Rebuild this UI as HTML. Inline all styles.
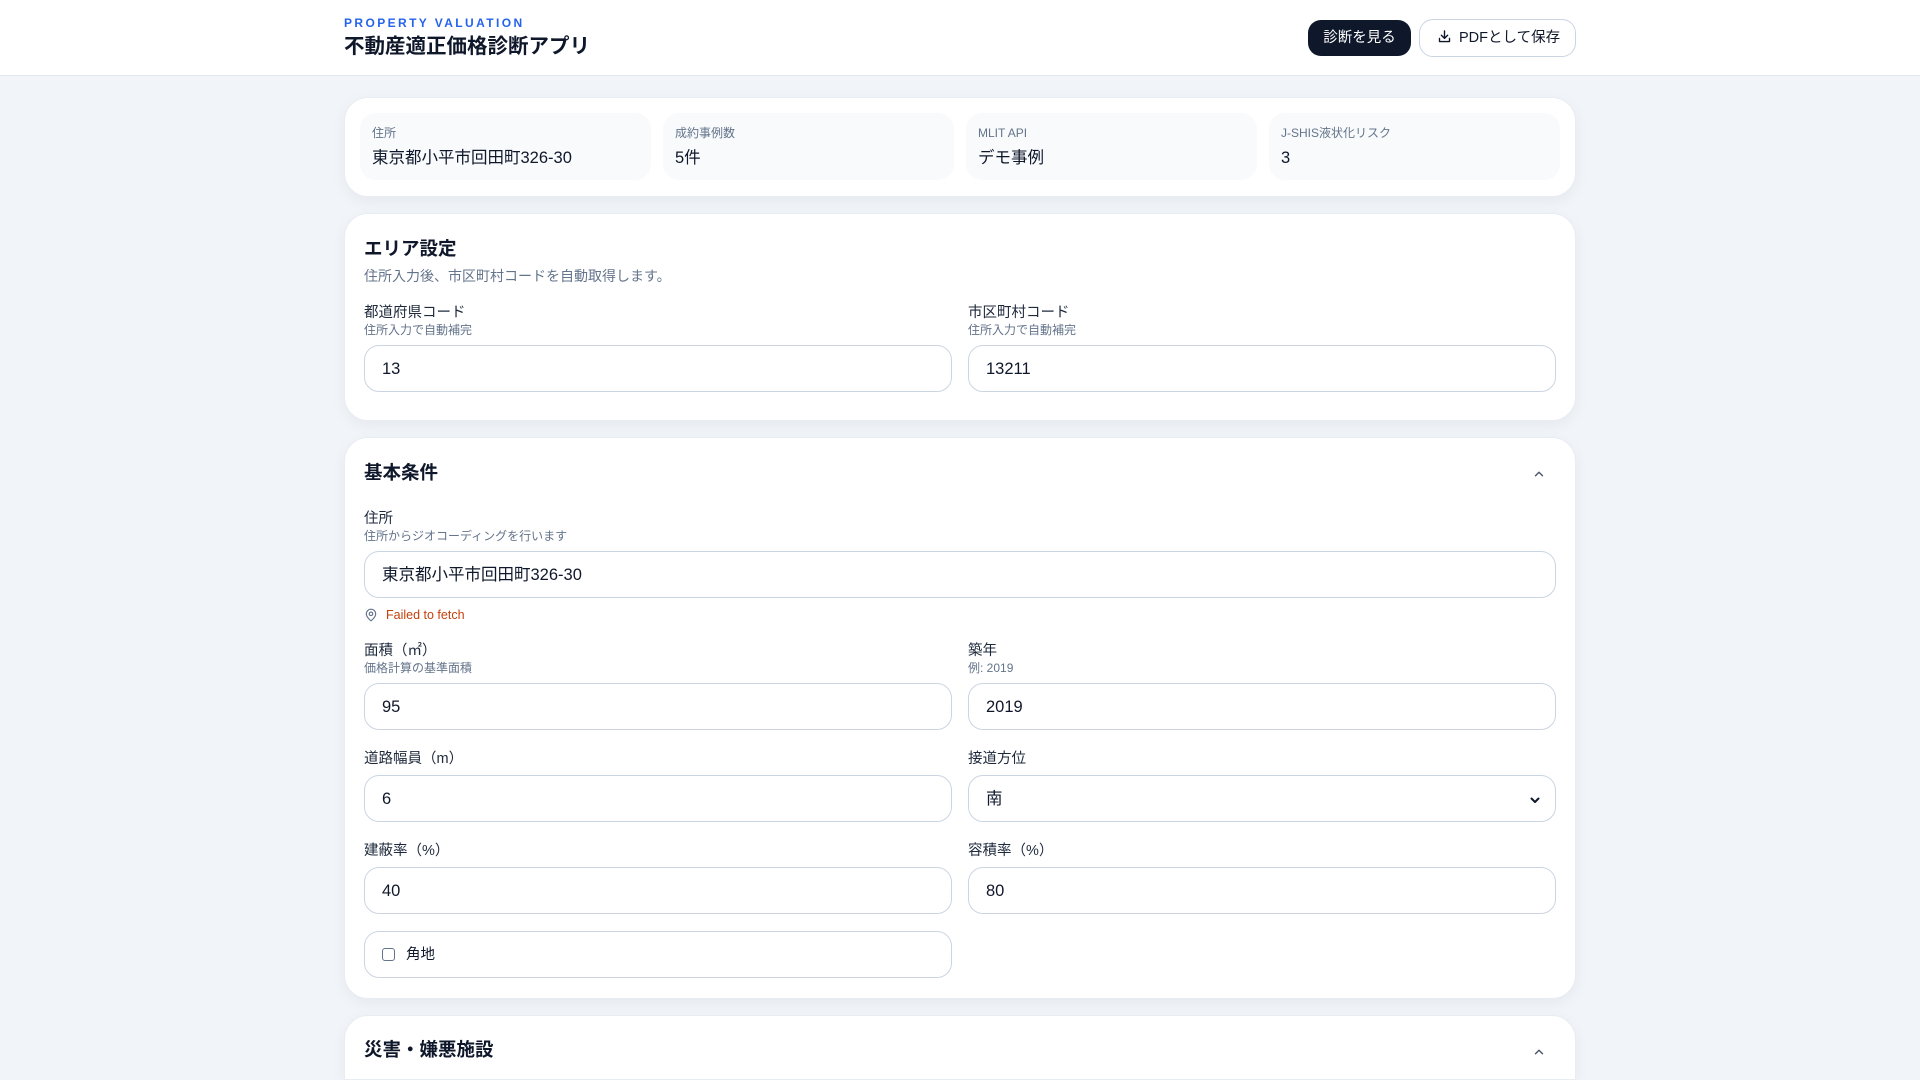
<!DOCTYPE html>
<html><head><meta charset="utf-8"><style>
*{box-sizing:border-box;margin:0;padding:0}
html,body{width:1920px;height:1080px;overflow:hidden}
body{background:#f1f4f8;font-family:"Liberation Sans","Noto Sans CJK JP",sans-serif;color:#0f172a;position:relative;line-height:1.3}
.a{position:absolute;white-space:nowrap}
.hdr{position:absolute;left:0;top:0;width:1920px;height:76px;background:#fff;border-bottom:1px solid #e2e8f0}
.card{position:absolute;left:344px;width:1232px;background:#fff;border-radius:24px;box-shadow:0 4px 14px rgba(15,23,42,.05);border:1px solid #e8edf3}
.tile{position:absolute;top:113px;height:67px;width:291px;background:#f8fafc;border-radius:16px}
.tl{position:absolute;left:12px;top:13px;font-size:12px;color:#64748b}
.tv{position:absolute;left:12px;top:35px;font-size:16.5px;color:#0f172a}
.lab{font-size:14.5px;color:#1e293b;margin-top:2px}
.hint{font-size:12px;color:#64748b;margin-top:2px}
.in{position:absolute;height:47px;border:1px solid #cbd5e1;border-radius:15px;background:#fff;font-size:16.5px;padding-left:17px;line-height:46px;color:#0f172a}
.h2{font-size:18.5px;font-weight:bold;color:#0f172a;margin-top:2px}
</style></head><body>
<div class="hdr"></div>
<div class="a" style="left:344px;top:16px;font-size:12px;font-weight:bold;letter-spacing:2.4px;color:#2563eb">PROPERTY VALUATION</div>
<div class="a" style="left:344px;top:34px;font-size:20.5px;font-weight:bold;color:#0f172a">不動産適正価格診断アプリ</div>
<div class="a" style="left:1308px;top:20px;width:103px;height:36px;border-radius:13px;background:#0f172a;color:#fff;font-size:14.5px;line-height:37px;text-align:center">診断を見る</div>
<div class="a" style="left:1419px;top:19px;width:157px;height:38px;border-radius:14px;background:#fff;border:1px solid #cbd5e1;color:#0f172a;font-size:14.5px;line-height:37px;padding-left:17px">
<svg width="15" height="15" viewBox="0 0 24 24" fill="none" stroke="#0f172a" stroke-width="2.2" stroke-linecap="round" stroke-linejoin="round" style="vertical-align:-2px;margin-right:7px"><path d="M12 3v12M7 10l5 5 5-5M4 15v5h16v-5"/></svg>PDFとして保存</div>

<div class="card" style="top:97px;height:100px"></div>
<div class="tile" style="left:360px"><div class="tl">住所</div><div class="tv">東京都小平市回田町326-30</div></div>
<div class="tile" style="left:663px"><div class="tl">成約事例数</div><div class="tv">5件</div></div>
<div class="tile" style="left:966px"><div class="tl">MLIT API</div><div class="tv">デモ事例</div></div>
<div class="tile" style="left:1269px"><div class="tl">J-SHIS液状化リスク</div><div class="tv">3</div></div>

<div class="card" style="top:213px;height:208px"></div>
<div class="a h2" style="left:364px;top:235px">エリア設定</div>
<div class="a" style="left:364px;top:267px;font-size:14px;color:#64748b">住所入力後、市区町村コードを自動取得します。</div>
<div class="a lab" style="left:364px;top:302px">都道府県コード</div>
<div class="a hint" style="left:364px;top:321px">住所入力で自動補完</div>
<div class="in" style="left:364px;top:345px;width:588px">13</div>
<div class="a lab" style="left:968px;top:302px">市区町村コード</div>
<div class="a hint" style="left:968px;top:321px">住所入力で自動補完</div>
<div class="in" style="left:968px;top:345px;width:588px">13211</div>

<div class="card" style="top:437px;height:562px"></div>
<div class="a h2" style="left:364px;top:459px">基本条件</div>
<svg class="a" style="left:1532px;top:467px" width="14" height="14" viewBox="0 0 24 24" fill="none" stroke="#475569" stroke-width="2.4" stroke-linecap="round" stroke-linejoin="round"><path d="M6 15l6-6 6 6"/></svg>
<div class="a lab" style="left:364px;top:508px">住所</div>
<div class="a hint" style="left:364px;top:527px">住所からジオコーディングを行います</div>
<div class="in" style="left:364px;top:551px;width:1192px">東京都小平市回田町326-30</div>
<svg class="a" style="left:364px;top:608px" width="14" height="14" viewBox="0 0 24 24" fill="none" stroke="#64748b" stroke-width="2" stroke-linecap="round" stroke-linejoin="round"><path d="M20 10c0 6-8 12-8 12s-8-6-8-12a8 8 0 0 1 16 0z"/><circle cx="12" cy="10" r="3"/></svg>
<div class="a" style="left:386px;top:607px;font-size:12.5px;color:#c2410c">Failed to fetch</div>
<div class="a lab" style="left:364px;top:640px">面積（㎡）</div>
<div class="a hint" style="left:364px;top:659px">価格計算の基準面積</div>
<div class="in" style="left:364px;top:683px;width:588px">95</div>
<div class="a lab" style="left:968px;top:640px">築年</div>
<div class="a hint" style="left:968px;top:659px">例: 2019</div>
<div class="in" style="left:968px;top:683px;width:588px">2019</div>
<div class="a lab" style="left:364px;top:748px">道路幅員（m）</div>
<div class="in" style="left:364px;top:775px;width:588px">6</div>
<div class="a lab" style="left:968px;top:748px">接道方位</div>
<div class="in" style="left:968px;top:775px;width:588px">南
<svg style="position:absolute;right:14px;top:18px" width="12" height="12" viewBox="0 0 24 24" fill="none" stroke="#0f172a" stroke-width="4" stroke-linecap="round" stroke-linejoin="round"><path d="M5 9l7 7 7-7"/></svg></div>
<div class="a lab" style="left:364px;top:840px">建蔽率（%）</div>
<div class="in" style="left:364px;top:867px;width:588px">40</div>
<div class="a lab" style="left:968px;top:840px">容積率（%）</div>
<div class="in" style="left:968px;top:867px;width:588px">80</div>
<div class="in" style="left:364px;top:931px;width:588px;font-size:14.5px"><span style="display:inline-block;width:13px;height:13px;border:1px solid #64748b;border-radius:3px;vertical-align:-2px;margin-right:11px"></span>角地</div>

<div class="card" style="top:1015px;height:65px;border-bottom-left-radius:0;border-bottom-right-radius:0"></div>
<div class="a h2" style="left:364px;top:1036px">災害・嫌悪施設</div>
<svg class="a" style="left:1532px;top:1045px" width="14" height="14" viewBox="0 0 24 24" fill="none" stroke="#475569" stroke-width="2.4" stroke-linecap="round" stroke-linejoin="round"><path d="M6 15l6-6 6 6"/></svg>
</body></html>
